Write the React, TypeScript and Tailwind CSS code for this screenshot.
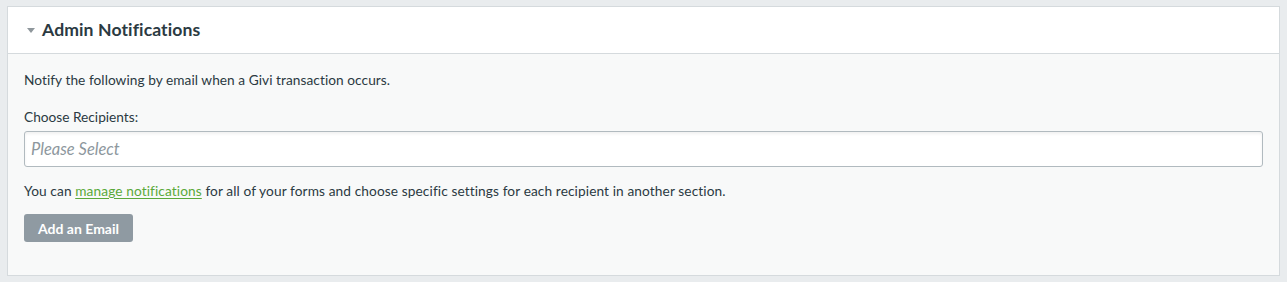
export default function App() {
  return (
    <div className="min-h-[282px] bg-[#e9ecee] px-[7px] py-[6px] font-['Lato','Open_Sans',sans-serif] text-[#2b3a42]">
      <section className="border border-[#d5dadd] bg-[#f8f9f9]">
        <header className="flex h-[47px] items-center gap-[7px] border-b border-[#d5dadd] bg-white pl-[19px]">
          <span className="mt-[1px] h-0 w-0 border-x-[4px] border-t-[5px] border-x-transparent border-t-[#8f979c]" />
          <h2 className="text-[17.6px] font-bold tracking-[0.1px]">Admin Notifications</h2>
        </header>

        <div className="px-[16px] pt-[17px] pb-[33px] text-[13.7px]">
          <p className="leading-[18px] tracking-[0.05px]">Notify the following by email when a Givi transaction occurs.</p>

          <label className="mt-[19px] block leading-[18px]">Choose Recipients:</label>
          <div className="mt-[5px] flex h-[36px] items-center rounded-[3px] border border-[#b1babf] bg-white px-[6px] shadow-[inset_0_2px_3px_rgba(0,0,0,0.06)]">
            <span className="text-[16.5px] italic text-[#8d979d]">Please Select</span>
          </div>

          <p className="mt-[15px] leading-[18px] tracking-[0.1px]">
            You can{" "}
            <a href="#" className="text-[#5aa93a] underline underline-offset-2">
              manage notifications
            </a>{" "}
            for all of your forms and choose specific settings for each recipient in another section.
          </p>

          <button
            type="button"
            className="mt-[14px] h-[28px] w-[109px] rounded-[3px] bg-[#8f9aa2] text-[14px] font-bold text-white"
          >
            Add an Email
          </button>
        </div>
      </section>
    </div>
  );
}
